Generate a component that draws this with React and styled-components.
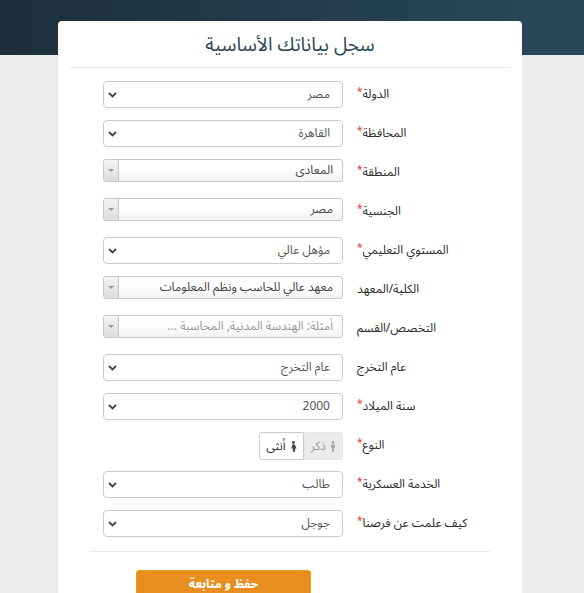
import React from "react";
import styled, { createGlobalStyle } from "styled-components";

const GlobalStyle = createGlobalStyle`
  html, body {
    margin: 0;
    padding: 0;
  }
  body {
    background: linear-gradient(to right, #1c2e3b, #29495b) top / 100% 55px no-repeat, #ececec;
    font-family: "Noto Sans Arabic", "Noto Kufi Arabic", "DejaVu Sans", sans-serif;
    min-height: 593px;
  }
`;

const fields = [
  { label: "الدولة", required: true, type: "select", value: "مصر" },
  { label: "المحافظة", required: true, type: "select", value: "القاهرة" },
  { label: "المنطقة", required: true, type: "combo", value: "المعادى" },
  { label: "الجنسية", required: true, type: "combo", value: "مصر" },
  { label: "المستوي التعليمي", required: true, type: "select", value: "مؤهل عالي" },
  { label: "الكلية/المعهد", type: "combo", value: "معهد عالي للحاسب ونظم المعلومات" },
  { label: "التخصص/القسم", type: "combo", placeholder: "أمثلة: الهندسة المدنية, المحاسبة ..." },
  { label: "عام التخرج", type: "select", value: "عام التخرج" },
  { label: "سنة الميلاد", required: true, type: "select", value: "2000" },
  { label: "النوع", required: true, type: "gender" },
  { label: "الخدمة العسكرية", required: true, type: "select", value: "طالب" },
  { label: "كيف علمت عن فرصنا", required: true, type: "select", value: "جوجل" },
];

const Chevron = () => (
  <svg width="9" height="6" viewBox="0 0 9 6">
    <polyline points="1,1 4.5,4.5 8,1" fill="none" stroke="#444" strokeWidth="1.8" />
  </svg>
);

const MaleIcon = () => (
  <svg width="6" height="11" viewBox="0 0 6 11">
    <circle cx="3" cy="1.5" r="1.4" fill="currentColor" />
    <path d="M1 3.4h4v3.6h-0.9v3.8h-2.2v-3.8h-0.9z" fill="currentColor" />
  </svg>
);

const FemaleIcon = () => (
  <svg width="7" height="11" viewBox="0 0 7 11">
    <circle cx="3.5" cy="1.5" r="1.4" fill="currentColor" />
    <path d="M2.2 3.4h2.6l1.8 4h-1.5v3.4h-2.2v-3.4h-1.5z" fill="currentColor" />
  </svg>
);

const Field = ({ field }) => {
  if (field.type === "gender") {
    return (
      <Toggle>
        <ToggleBtn>
          <MaleIcon /> ذكر
        </ToggleBtn>
        <ToggleBtn $active>
          <FemaleIcon /> أنثى
        </ToggleBtn>
      </Toggle>
    );
  }
  if (field.type === "combo") {
    return (
      <Combo>
        <ComboText $placeholder={!field.value}>{field.value || field.placeholder}</ComboText>
        <ComboArrow>
          <Tri />
        </ComboArrow>
      </Combo>
    );
  }
  return (
    <Select>
      <SelectText>{field.value}</SelectText>
      <Chevron />
    </Select>
  );
};

export default function App() {
  return (
    <>
      <GlobalStyle />
      <Page>
        <Card>
          <Title>سجل بياناتك الأساسية</Title>
          <Rule />
          <Form>
            {fields.map((f) => (
              <Row key={f.label}>
                <Control>
                  <Field field={f} />
                </Control>
                <Label>
                  {f.label}
                  {f.required && <Star>*</Star>}
                </Label>
              </Row>
            ))}
          </Form>
          <FooterRule />
          <Actions>
            <Submit>حفظ و متابعة</Submit>
          </Actions>
        </Card>
      </Page>
    </>
  );
}

const Page = styled.div`
  padding-top: 21px;
  display: flex;
  justify-content: center;
`;

const Card = styled.div`
  width: 464px;
  margin-left: -4px;
  background: #fff;
  border-radius: 4px 4px 0 0;
  padding-bottom: 20px;
`;

const Title = styled.h1`
  margin: 0;
  padding-top: 10px;
  height: 36px;
  text-align: center;
  font-size: 19px;
  font-weight: normal;
  color: #2b4757;
  direction: rtl;
  line-height: 28px;
`;

const Rule = styled.div`
  height: 1px;
  background: #e8e8e8;
  margin: 0 12px 13px 12px;
`;

const Form = styled.div`
  display: flex;
  flex-direction: column;
`;

const Row = styled.div`
  display: grid;
  grid-template-columns: 240px 1fr;
  column-gap: 14px;
  padding-left: 45px;
  margin-bottom: 12px;
  height: 27px;
`;

const Control = styled.div`
  display: flex;
  justify-content: flex-end;
  align-items: flex-start;
`;

const Label = styled.div`
  direction: rtl;
  text-align: left;
  font-size: 12px;
  color: #2a2a2a;
  padding-top: 4px;
  line-height: 20px;
  font-weight: normal;
`;

const Star = styled.span`
  color: #e2393a;
  font-size: 10px;
  vertical-align: top;
  line-height: 14px;
`;

const Select = styled.div`
  width: 240px;
  height: 27px;
  box-sizing: border-box;
  border: 1px solid #ccc;
  border-radius: 4px;
  display: flex;
  align-items: center;
  justify-content: space-between;
  flex-direction: row-reverse;
  padding: 0 12px 0 4px;
  direction: ltr;
`;

const SelectText = styled.span`
  direction: rtl;
  font-size: 12px;
  color: #555;
`;

const Combo = styled.div`
  width: 240px;
  height: 23px;
  box-sizing: border-box;
  border: 1px solid #c8c8c8;
  border-radius: 3px;
  display: flex;
  flex-direction: row-reverse;
  overflow: hidden;
  background: linear-gradient(to bottom, #fff 40%, #f2f2f2);
`;

const ComboText = styled.span`
  flex: 1;
  direction: rtl;
  font-size: 12px;
  line-height: 21px;
  padding-right: 9px;
  color: ${(p) => (p.$placeholder ? "#999" : "#444")};
`;

const ComboArrow = styled.span`
  width: 14px;
  border-right: 1px solid #c8c8c8;
  background: linear-gradient(to bottom, #f4f4f4, #dcdcdc);
  display: flex;
  align-items: center;
  justify-content: center;
`;

const Tri = styled.span`
  width: 0;
  height: 0;
  border-left: 3px solid transparent;
  border-right: 3px solid transparent;
  border-top: 3px solid #999;
`;

const Toggle = styled.div`
  display: flex;
  direction: rtl;
  height: 28px;
`;

const ToggleBtn = styled.div`
  box-sizing: border-box;
  height: 28px;
  display: flex;
  align-items: center;
  gap: 4px;
  padding: 0 6px;
  font-size: 12px;
  border: 1px solid ${(p) => (p.$active ? "#ccc" : "#e6e6e6")};
  background: ${(p) => (p.$active ? "#fff" : "#ebebeb")};
  color: ${(p) => (p.$active ? "#333" : "#999")};
  border-radius: ${(p) => (p.$active ? "3px 0 0 3px" : "0 3px 3px 0")};
  svg {
    color: ${(p) => (p.$active ? "#444" : "#aaa")};
  }
`;

const FooterRule = styled.div`
  height: 1px;
  background: #e8e8e8;
  margin: 2px 32px 14px 32px;
`;

const Actions = styled.div`
  padding-left: 78px;
`;

const Submit = styled.button`
  width: 175px;
  height: 28px;
  background: #e88e1f;
  border: 1px solid #e3a413;
  border-radius: 3px;
  color: #fff;
  font-family: inherit;
  font-size: 12px;
  font-weight: bold;
  direction: rtl;
`;
